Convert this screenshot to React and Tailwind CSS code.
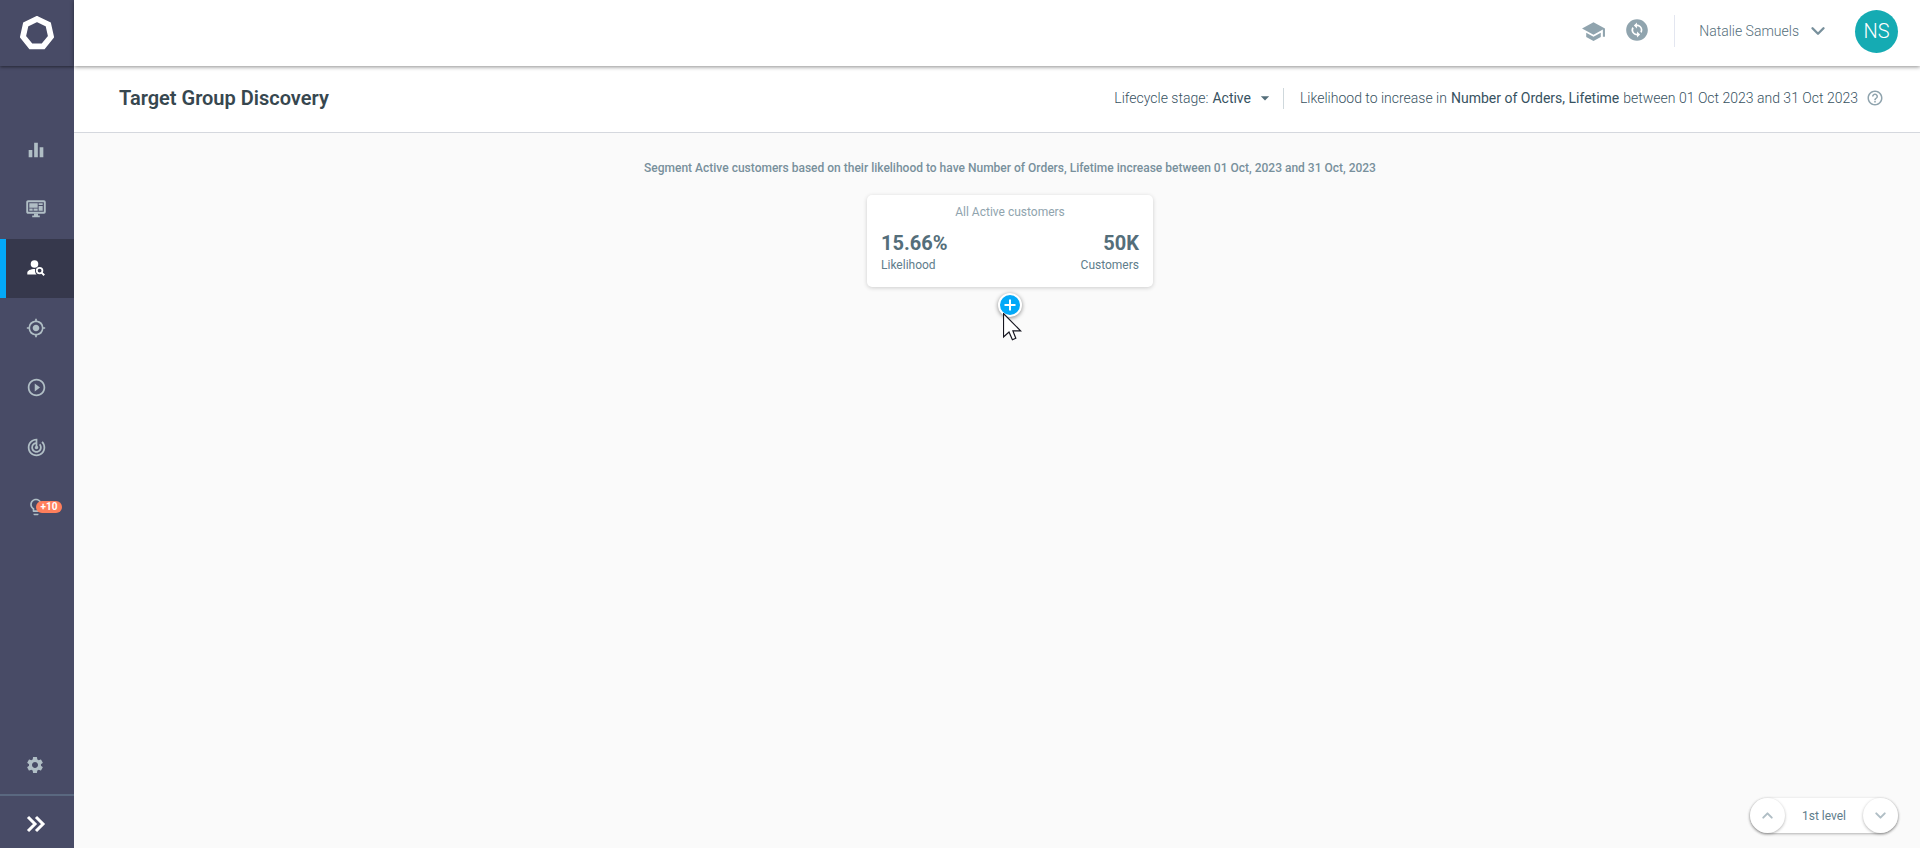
import {
  MdEqualizer,
  MdMyLocation,
  MdPlayCircleOutline,
  MdTrackChanges,
  MdLightbulbOutline,
  MdSettings,
  MdSchool,
  MdChangeCircle,
  MdHelpOutline,
  MdArrowDropDown,
} from "react-icons/md";
import { ChevronDown, ChevronUp } from "lucide-react";

function Logo() {
  return (
    <svg width="34" height="34" viewBox="0 0 34 34" fill="none" aria-hidden="true">
      <path
        d="M17 3 L28.3 8.5 L31 20.7 L23.2 30.4 H10.8 L3 20.7 L5.7 8.5 Z"
        stroke="#fff"
        strokeWidth="5.8"
      />
    </svg>
  );
}

function MonitorIcon() {
  return (
    <svg width="20" height="18" viewBox="0 0 20 18" fill="none" aria-hidden="true">
      <rect x="1.2" y="1.2" width="17.6" height="11.6" rx="0.8" stroke="currentColor" strokeWidth="1.9" />
      <path
        d="M3.3 3.3h8.4v4.4h-8.4zM12.6 3.3h4.1v1.7h-4.1zM12.6 5.9h4.1v4.8h-4.1zM3.3 8.6h3.4v2.1h-3.4zM7.5 8.6h4.2v2.1h-4.2zM8 13.5h4v2h1.8v1.8h-7.6v-1.8H8z"
        fill="currentColor"
      />
    </svg>
  );
}

function PersonSearchIcon() {
  return (
    <svg width="18" height="17" viewBox="0 0 18 17" fill="none" aria-hidden="true">
      <circle cx="7.5" cy="4" r="3.8" fill="currentColor" />
      <path
        d="M8.2 9C3.6 8.9 0.3 10.6 0.3 12.8V14.6H9.6C8.2 13.2 7.7 11 8.2 9Z"
        fill="currentColor"
      />
      <circle cx="12.6" cy="10.6" r="2.8" stroke="currentColor" strokeWidth="1.8" />
      <path d="M14.6 12.6L17.2 15.2" stroke="currentColor" strokeWidth="2" />
    </svg>
  );
}

function DoubleChevron() {
  return (
    <svg width="20" height="18" viewBox="0 0 20 18" fill="none" aria-hidden="true">
      <path d="M2 2L9 9L2 16M10 2L17 9L10 16" stroke="#fff" strokeWidth="3" />
    </svg>
  );
}

function Pointer() {
  return (
    <svg width="19" height="28" viewBox="0 0 19 28" aria-hidden="true">
      <path
        d="M0.5 0.5V24L6 19L9.4 26.8L12.8 25.2L9.9 17.9H17.6Z"
        fill="#fff"
        stroke="#15151f"
        strokeWidth="1.2"
      />
    </svg>
  );
}

const navItems = [
  { label: "Reports", icon: <MdEqualizer size={22} /> },
  { label: "Dashboards", icon: <MonitorIcon /> },
  { label: "Target Group Discovery", icon: <PersonSearchIcon />, active: true },
  { label: "Targeting", icon: <MdMyLocation size={20} /> },
  { label: "Run", icon: <MdPlayCircleOutline size={21} /> },
  { label: "Tracking", icon: <MdTrackChanges size={21} /> },
  { label: "Insights", icon: <MdLightbulbOutline size={20} />, badge: "+10" },
];

function Sidebar() {
  return (
    <aside className="flex w-[74px] shrink-0 flex-col bg-[#484b66] text-[#b0bec5]">
      <a
        href="#home"
        aria-label="Home"
        className="flex h-[66px] items-center justify-center shadow-[0_1px_3px_rgba(0,0,0,0.5)]"
      >
        <Logo />
      </a>
      <nav className="mt-[54px] flex h-[416px] flex-col justify-between">
        {navItems.map((item) => (
          <a
            key={item.label}
            href="#nav"
            aria-label={item.label}
            className={
              item.active
                ? "flex h-[59px] items-center justify-center border-l-[6px] border-[#03a9f8] bg-[#36384c] pr-2 text-white"
                : "flex h-[59px] items-center justify-center pr-[2px]"
            }
          >
            <span className="relative">
              {item.icon}
              {item.badge && (
                <span className="absolute top-1 left-2.5 flex h-3 w-[26px] items-center justify-center rounded-full bg-[#ff7f5c] text-[10px] font-bold text-white">
                  {item.badge}
                </span>
              )}
            </span>
          </a>
        ))}
      </nav>
      <a href="#settings" aria-label="Settings" className="mt-auto flex h-[58px] items-center justify-center pr-1">
        <MdSettings size={20} />
      </a>
      <button
        type="button"
        aria-label="Expand menu"
        className="flex h-[54px] items-center justify-center border-t-2 border-[#5a6880] pt-1 pr-0.5"
      >
        <DoubleChevron />
      </button>
    </aside>
  );
}

function TopBar() {
  return (
    <header className="relative flex h-[66px] items-center justify-end bg-white pr-[22px] pb-1 text-[#90a4ae] shadow-[0_1px_4px_rgba(0,0,0,0.45)]">
      <button type="button" aria-label="Academy">
        <MdSchool size={25} />
      </button>
      <button type="button" aria-label="Sync" className="ml-[18px] pb-0.5">
        <MdChangeCircle size={26} />
      </button>
      <span className="ml-6 h-8 w-px bg-[#e3e6f0]" />
      <button type="button" className="ml-6 flex items-center gap-2 text-sm font-light text-[#546e7a]">
        Natalie Samuels
        <ChevronDown size={22} strokeWidth={2.6} className="text-[#78909c]" />
      </button>
      <span className="ml-[26px] flex size-[43px] items-center justify-center rounded-full bg-[#15abb3] text-xl font-light text-white">
        NS
      </span>
    </header>
  );
}

function FilterBar() {
  return (
    <section className="flex h-[67px] items-center justify-between border-b border-[#d5d8de] bg-white pr-[36px] pb-0.5 pl-[45px]">
      <h1 className="text-xl font-semibold text-[#37474f]">Target Group Discovery</h1>
      <div className="flex items-center text-sm font-light text-[#37525f]">
        <label htmlFor="stage">Lifecycle stage:</label>
        <span className="ml-1 flex items-center">
          <select
            id="stage"
            defaultValue="Active"
            className="field-sizing-content appearance-none bg-transparent font-normal text-[#37525f]"
          >
            <option>Active</option>
            <option>New</option>
            <option>Churn</option>
          </select>
          <MdArrowDropDown size={20} className="ml-1 text-[#546e7a]" />
        </span>
        <span className="mr-4 ml-2 h-[21px] w-px bg-[#cfd8dc]" />
        <span>Likelihood to increase in</span>
        <span className="mx-1 font-normal">Number of Orders, Lifetime</span>
        <span>between 01 Oct 2023 and 31 Oct 2023</span>
        <MdHelpOutline size={18} className="ml-2 text-[#90a4ae]" />
      </div>
    </section>
  );
}

function RootCard() {
  return (
    <article className="mt-[18px] flex h-[92px] w-[286px] flex-col rounded-[5px] bg-white px-3.5 pt-[9px] shadow-[0_1px_4px_rgba(0,0,0,0.18)]">
      <h2 className="text-center text-xs leading-4 text-[#90a4ae]">All Active customers</h2>
      <div className="mt-[11px] flex justify-between text-xs leading-4 text-[#607d8b]">
        <div>
          <p className="mb-0.5 text-xl leading-6 font-bold text-[#546e7a]">15.66%</p>
          <p>Likelihood</p>
        </div>
        <div className="text-right">
          <p className="mb-0.5 text-xl leading-6 font-bold text-[#546e7a]">50K</p>
          <p>Customers</p>
        </div>
      </div>
    </article>
  );
}

function LevelSwitch() {
  const round =
    "flex size-[35px] items-center justify-center rounded-full bg-white text-[#b0bec5] shadow-[0_1px_3px_rgba(0,0,0,0.3)]";
  return (
    <div className="mt-auto mr-[22px] mb-[15px] flex w-[148px] items-center justify-between self-end rounded-full bg-white text-xs text-[#607d8b] shadow-[0_1px_3px_rgba(0,0,0,0.3)]">
      <button type="button" aria-label="Previous level" className={round}>
        <ChevronUp size={17} strokeWidth={2.8} />
      </button>
      1st level
      <button type="button" aria-label="Next level" className={round}>
        <ChevronDown size={17} strokeWidth={2.8} />
      </button>
    </div>
  );
}

export default function App() {
  return (
    <div className="flex min-h-screen bg-[#fafafa] font-['Roboto',sans-serif]">
      <Sidebar />
      <div className="flex min-w-0 flex-1 flex-col">
        <TopBar />
        <FilterBar />
        <main className="flex flex-1 flex-col">
          <div className="flex flex-col items-center pt-[26px] pl-[26px]">
            <p className="text-xs leading-[18px] font-medium text-[#78909c]">
              Segment Active customers based on their likelihood to have Number of Orders, Lifetime
              increase between 01 Oct, 2023 and 31 Oct, 2023
            </p>
            <RootCard />
            <div className="relative mt-1.5">
              <button
                type="button"
                aria-label="Add level"
                className="flex size-6 items-center justify-center rounded-full border-2 border-white bg-[#03a9f8] shadow-[0_1px_4px_rgba(0,0,0,0.45)]"
              >
                <svg width="12" height="12" viewBox="0 0 12 12" aria-hidden="true">
                  <path d="M6 0.5V11.5M0.5 6H11.5" stroke="#fff" strokeWidth="2" />
                </svg>
              </button>
              <span className="pointer-events-none absolute top-5 left-[5px]">
                <Pointer />
              </span>
            </div>
          </div>
          <LevelSwitch />
        </main>
      </div>
    </div>
  );
}
